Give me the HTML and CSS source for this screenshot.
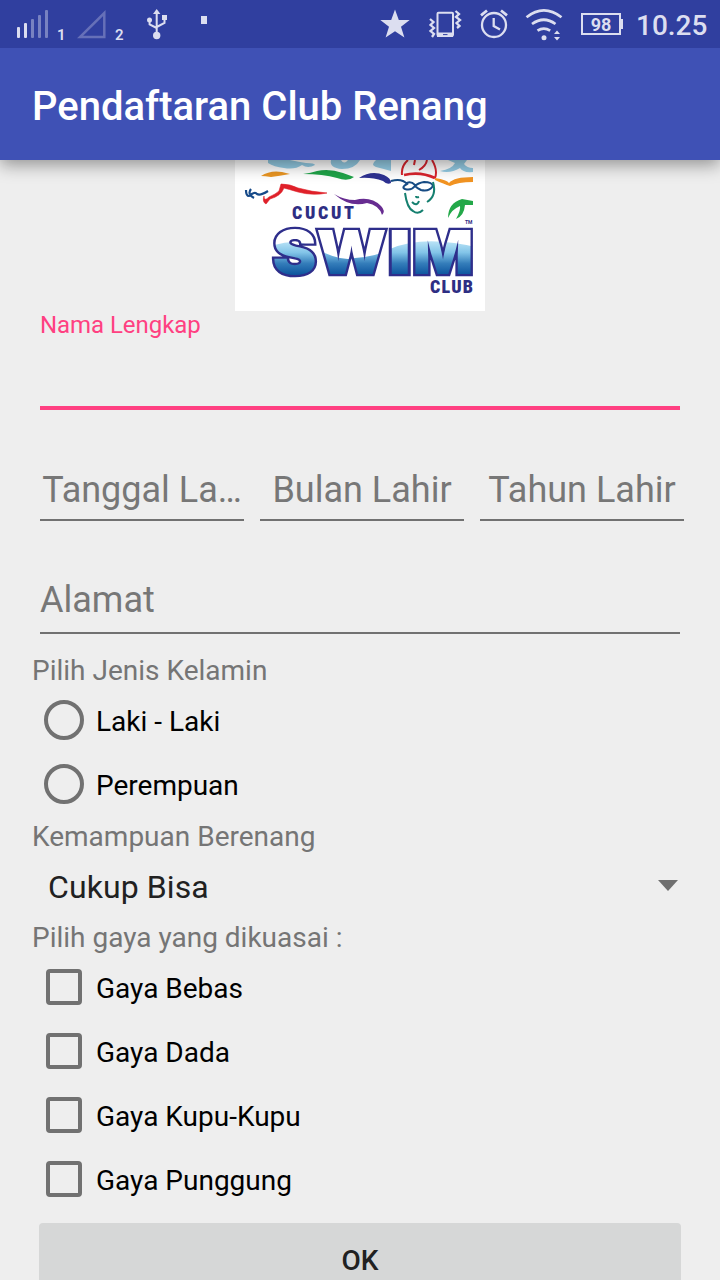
FILE: index.html
```html
<!DOCTYPE html>
<html lang="id">
<head>
<meta charset="utf-8">
<title>Pendaftaran Club Renang</title>
<link rel="stylesheet" href="styles.css">
</head>
<body>
<div class="screen">
  <div class="status">
    <div class="status-group">
      <svg class="signal" width="34" height="48" viewBox="15 0 34 48"><g fill="#dcdef0"><rect x="17" y="27" width="3" height="11" rx="1"/><rect x="24" y="23" width="3" height="15" rx="1"/><g opacity=".42"><rect x="31" y="19" width="3" height="19" rx="1"/><rect x="38" y="15" width="3" height="23" rx="1"/><rect x="45" y="10" width="3" height="28" rx="1"/></g></g></svg>
      <span class="sim sim-one">1</span>
      <svg class="no-signal" width="30" height="48" viewBox="77 0 30 48"><path d="M80 37H104.300V13Z" fill="none" stroke="#6670b8" stroke-width="2.500"/></svg>
      <span class="sim sim-two">2</span>
      <svg class="usb" width="22" height="48" viewBox="146 0 22 48"><g fill="none" stroke="#dcdef0" stroke-width="2"><path d="M156.700 12V34M149.600 20V24.500L156.700 28M164.500 18V23L156.700 27"/></g><g fill="#dcdef0"><path d="M153 14L156.700 9L160.400 14Z"/><circle cx="149.500" cy="20" r="2.500"/><rect x="162" y="15" width="5" height="5"/><circle cx="156.700" cy="35.500" r="3.700"/></g></svg>
      <i class="dot"></i>
    </div>
    <div class="status-group">
      <svg width="30" height="48" viewBox="380 0 30 48"><path fill="#dcdef0" d="M395 9.500L398.800 19.900H409.700L401 26.700L404.400 37.500L395 31.200L385.600 37.500L389 26.700L380.300 19.900H391.200Z"/></svg>
      <svg class="vibrate" width="34" height="48" viewBox="428 0 34 48"><g fill="none" stroke="#dcdef0"><rect x="437.500" y="12.700" width="15.500" height="23" rx="1" stroke-width="2"/><path d="M430 19L433.500 22L430.500 25L434 28L430.500 31L434 34L432 37M455.500 11L459 14L456 17L460 20L456.500 23L459.500 26L457 28" stroke-width="2.300"/></g><path d="M437 32.500H453V37H437Z" fill="#dcdef0"/><path d="M443 34.600H447.500" stroke="#303f9f"/></svg>
      <svg class="alarm" width="30" height="48" viewBox="479 0 30 48"><g fill="none" stroke="#dcdef0" stroke-width="2.300"><circle cx="494" cy="25" r="12"/><path d="M493.700 18V26L500 29.500"/><path d="M481 15.300L487 10.500M507 15.300L501 10.500" stroke-width="2.800"/></g></svg>
      <svg class="wifi" width="38" height="48" viewBox="525 0 38 48"><g fill="none" stroke="#dcdef0" stroke-width="2.700"><path d="M526.500 17.200Q543.800 3.500 561.500 17.200M532 24Q543.800 15.500 555.500 24M537.500 30.700Q543.800 26.500 550.200 30.700"/></g><g fill="#dcdef0"><circle cx="544" cy="37.700" r="2.500"/><path d="M554 34L557 30.500L560 34ZM554 37L557 40.500L560 37Z"/></g></svg>
      <div class="battery">98</div>
      <span class="clock">10.25</span>
    </div>
  </div>
  <header class="toolbar"><h1>Pendaftaran Club Renang</h1></header>

  <main class="form">
    <svg class="logo" width="250" height="151" viewBox="235 160 250 151">
      <defs>
        <linearGradient id="sea" x1="0" y1="240" x2="0" y2="276" gradientUnits="userSpaceOnUse"><stop offset="0" stop-color="#c0e7f8"/><stop offset=".35" stop-color="#82c4e8"/><stop offset=".65" stop-color="#347dba"/><stop offset="1" stop-color="#08509a"/></linearGradient>
        <pattern id="wave" x="0" y="0" width="720" height="320" patternUnits="userSpaceOnUse"><rect width="720" height="320" fill="#fff"/><path d="M260 252Q290 234 315 248T355 258Q375 257 390 249Q424 234 480 248V285H260Z" fill="url(#sea)"/></pattern>
      </defs>
      <rect x="235" y="160" width="250" height="151" fill="#fff"/>
      <g fill="#94cce5">
        <path d="M268 160H290Q299 162 306 163Q315 163 315 165Q308 169 302 165Q295 170 284 168Q274 167 268 163Z"/>
        <path d="M331 160Q329 168 342 169Q355 169 360 160H348Q344 165 341 160Z"/>
        <path d="M376 160Q370 165 376 167Q384 169 391 171V160Z"/>
        <path d="M448 160H467L464 164Q467 168 473 168V172Q463 173 460 168Q450 174 440 171Q452 169 455 163Z"/>
      </g>
      <path d="M261 176Q270 170 282 172L290 174Q279 176 271 177Q265 176 261 176Z" fill="#ea9623"/>
      <path d="M303 174Q311 173 317 171Q329 168 343 173L354 177Q348 182 337 178Q323 174 303 174Z" fill="#20a449"/>
      <path d="M359 178Q371 170 384 175Q391 178 391 183Q387 185 383 181Q372 177 359 178Z" fill="#2e3192"/>
      <path d="M246 190Q246 196 249 196Q255 191 257 194Q260 196 268 191M251 189Q247 194 254 198" fill="none" stroke="#164a89" stroke-width="2.200"/>
      <path d="M264 196Q264 202 269 197Q276 194 279 191L281 184Q290 184 298 188Q312 192 327 193Q313 196 298 192Q288 189 284 188Q281 196 270 199L266 204Q262 202 264 196Z" fill="#df2029" stroke="#df2029" stroke-width=".6"/>
      <path d="M334 194Q344 200 355 200Q371 196 381 206Q386 211 382 215Q379 205 367 203Q350 208 334 194Z" fill="#672c91"/>
      <g fill="none" stroke="#d9242d" stroke-width="2">
        <path d="M402 175Q401 166 408 160M435 178Q438 170 432 160M415 160L414 165M427 160Q426 166 419 170"/>
        <path d="M404 175Q420 171 435 178" stroke-width="2.800"/>
      </g>
      <path d="M391 181Q402 178 407 184Q401 187 405 189Q411 191 415 186Q418 183 424 182Q432 182 433 186Q429 192 421 190Q417 188 415 186M407 183Q411 181 415 185" fill="none" stroke="#174c84" stroke-width="2"/>
      <path d="M405 193Q407 208 413 211Q418 215 423 210M416 196Q416 198 419 197M412 202Q417 207 419 201M433 182Q437 196 427 202" fill="none" stroke="#168070" stroke-width="2"/>
      <path d="M435 178Q447 180 449 183Q454 177 473 177V182Q458 182 450 186Q444 184 435 180Z" fill="#f29422"/>
      <path d="M448 218Q448 203 462 199L473 201V205H465Q464 216 456 219Q461 210 460 206Q452 209 448 218Z" fill="#23a849"/>
      <text x="465" y="223.500" class="logo-tm">TM</text>
      <g class="logo-small"><text x="292" y="219" textLength="62">CUCUT</text><text x="430" y="293" textLength="43">CLUB</text></g>
      <g class="logo-big">
        <text x="272.500" y="273.500" textLength="44" lengthAdjust="spacingAndGlyphs">S</text>
        <text x="316.500" y="273.500" textLength="70" lengthAdjust="spacingAndGlyphs">W</text>
        <text x="388" y="273.500" textLength="23.500" lengthAdjust="spacingAndGlyphs">I</text>
        <text x="412.500" y="273.500" textLength="61" lengthAdjust="spacingAndGlyphs">M</text>
      </g>
    </svg>

    <div class="field name-field">Nama Lengkap</div>
    <div class="birth-row">
      <div class="field">Tanggal La…</div>
      <div class="field">Bulan Lahir</div>
      <div class="field">Tahun Lahir</div>
    </div>
    <div class="field address-field">Alamat</div>

    <div class="section gender">Pilih Jenis Kelamin</div>
    <div class="choice"><i class="radio"></i><span>Laki - Laki</span></div>
    <div class="choice"><i class="radio"></i><span>Perempuan</span></div>

    <div class="section skill">Kemampuan Berenang</div>
    <div class="select"><span>Cukup Bisa</span><svg width="20" height="11" viewBox="0 0 20 11"><path d="M0 0H20L10 11Z" fill="#6f6f6f"/></svg></div>

    <div class="section styles">Pilih gaya yang dikuasai :</div>
    <div class="choice"><i class="check"></i><span>Gaya Bebas</span></div>
    <div class="choice"><i class="check"></i><span>Gaya Dada</span></div>
    <div class="choice"><i class="check"></i><span>Gaya Kupu-Kupu</span></div>
    <div class="choice"><i class="check"></i><span>Gaya Punggung</span></div>
    <div class="submit">OK</div>
  </main>
</div>
</body>
</html>
```
FILE: styles.css
```css
* { box-sizing: border-box; }
body { margin: 0; background: #eee; font-family: Roboto, "Liberation Sans", sans-serif; }
svg { display: block; flex: none; }
.screen { width: 720px; height: 1280px; overflow: hidden; }

.status { position: relative; z-index: 2; height: 48px; padding: 0 12px 0 15px; display: flex; justify-content: space-between; background: #303f9f; color: #dcdef0; }
.status-group { display: flex; align-items: center; }
.sim { font-size: 15px; font-weight: 600; line-height: 18px; padding-top: 21px; width: 10px; }
.sim-one { margin-left: 8px; }
.no-signal { margin-left: 10px; }
.sim-two { margin-left: 8px; }
.usb { margin-left: 21px; }
.dot { width: 6px; height: 8px; margin: 0 0 8px 33px; background: #dcdef0; }
.vibrate { margin-left: 18px; }
.alarm { margin-left: 17px; }
.wifi { margin-left: 16px; }
.battery { position: relative; width: 40px; height: 22px; margin: 0 0 0 18px; border: 2px solid #dcdef0; font-size: 18px; font-weight: 700; line-height: 20px; text-align: center; }
.battery::after { content: ""; position: absolute; right: -4px; top: 4px; width: 2px; height: 10px; background: #dcdef0; }
.clock { width: 72px; margin-left: 15px; padding-top: 4px; font-size: 28px; font-weight: 500; line-height: 34px; white-space: nowrap; }

.toolbar { position: relative; height: 112px; padding: 6px 32px 0; display: flex; align-items: center; background: #3f51b5; box-shadow: 0 5px 16px rgba(0,0,0,.38); }
.toolbar h1 { margin: 0; color: #fff; font-size: 40px; font-weight: 500; line-height: 48px; }

.form { display: flex; flex-direction: column; }
.logo { align-self: center; }
.logo-small { font: 900 18px Roboto, sans-serif; fill: #2e2e83; }
.logo-small text { font-stretch: condensed; }
.logo-big { font: 900 61px Inter, sans-serif; fill: url(#wave); stroke: #2e2e8b; stroke-width: 4.6; paint-order: stroke; }
.logo-tm { font: 700 5px Roboto, sans-serif; fill: #2e2e83; }

.field { color: #777; font-size: 36px; line-height: 46px; white-space: nowrap; }
.name-field { height: 99px; margin: 0 40px; border-bottom: 4px solid #ff4081; color: #ff4081; font-size: 24px; line-height: 28px; letter-spacing: -.05px; }
.birth-row { margin: 57px 36px 0 40px; display: grid; grid-template-columns: repeat(3, 204px); gap: 16px; }
.birth-row .field { height: 54px; border-bottom: 2px solid #717171; text-align: center; }
.address-field { height: 57px; margin: 56px 40px 0; border-bottom: 2px solid #717171; }

.section { padding-left: 32px; color: #757575; font-size: 28px; line-height: 36px; }
.gender { height: 35px; margin-top: 19px; }
.skill { height: 38px; padding-top: 3px; }
.styles { height: 37px; padding-top: 2px; }
.choice { height: 64px; padding-left: 44px; display: flex; align-items: center; color: #000; font-size: 28px; }
.choice span { padding-top: 2px; }
.radio { width: 40px; height: 40px; margin-right: 12px; border: 4px solid #717171; border-radius: 50%; }
.check { width: 36px; height: 36px; margin: 0 14px 0 2px; border: 4px solid #717171; border-radius: 4px; }
.select { height: 64px; padding: 0 42px 0 48px; display: flex; align-items: center; justify-content: space-between; color: #212121; font-size: 32px; letter-spacing: .1px; }
.select span { padding-top: 2px; }
.select svg { margin-bottom: 2px; }
.submit { height: 76px; flex: none; margin: 12px 39px 0; border-radius: 4px; background: #d6d7d7; color: #212121; font-size: 28px; font-weight: 500; line-height: 76px; text-align: center; }
```
